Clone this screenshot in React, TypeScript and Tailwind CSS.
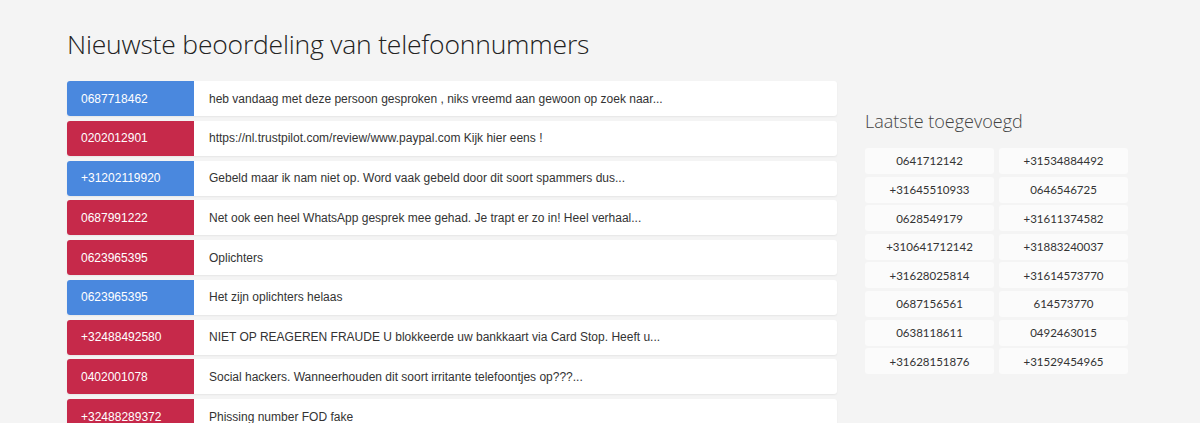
const reviews = [
  { number: '0687718462', type: 'blue', text: 'heb vandaag met deze persoon gesproken , niks vreemd aan gewoon op zoek naar...' },
  { number: '0202012901', type: 'red', text: 'https://nl.trustpilot.com/review/www.paypal.com Kijk hier eens !' },
  { number: '+31202119920', type: 'blue', text: 'Gebeld maar ik nam niet op. Word vaak gebeld door dit soort spammers dus...' },
  { number: '0687991222', type: 'red', text: 'Net ook een heel WhatsApp gesprek mee gehad. Je trapt er zo in! Heel verhaal...' },
  { number: '0623965395', type: 'red', text: 'Oplichters' },
  { number: '0623965395', type: 'blue', text: 'Het zijn oplichters helaas' },
  { number: '+32488492580', type: 'red', text: 'NIET OP REAGEREN FRAUDE U blokkeerde uw bankkaart via Card Stop. Heeft u...' },
  { number: '0402001078', type: 'red', text: 'Social hackers. Wanneerhouden dit soort irritante telefoontjes op???...' },
  { number: '+32488289372', type: 'red', text: 'Phissing number FOD fake' },
]

const latest = [
  '0641712142', '+31534884492',
  '+31645510933', '0646546725',
  '0628549179', '+31611374582',
  '+310641712142', '+31883240037',
  '+31628025814', '+31614573770',
  '0687156561', '614573770',
  '0638118611', '0492463015',
  '+31628151876', '+31529454965',
]

export default function App() {
  return (
    <div className="min-h-[423px] bg-[#f4f4f4] pl-[67px] pt-[24px] overflow-hidden">
      <h1 className="text-[26.5px] font-light text-[#222] leading-[40px] tracking-[-0.2px]" style={{ fontFamily: '"Open Sans", sans-serif' }}>
        Nieuwste beoordeling van telefoonnummers
      </h1>
      <div className="flex gap-[28px] mt-[17px]">
        <div className="w-[770px] flex flex-col gap-[4.75px]" style={{ fontFamily: '"Liberation Sans", Arial, sans-serif' }}>
          {reviews.map((r, i) => (
            <div key={i} className="flex h-[35px] bg-white rounded-[3px] shadow-[0_1px_2px_rgba(0,0,0,0.06)]">
              <div className={`w-[127px] shrink-0 rounded-l-[3px] flex items-center pl-[14px] text-[12px] text-white ${r.type === 'blue' ? 'bg-[#4a88de]' : 'bg-[#c6294a]'}`}>
                {r.number}
              </div>
              <div className="flex items-center pl-[15px] text-[12px] text-[#333]">{r.text}</div>
            </div>
          ))}
        </div>
        <div className="w-[263px] pt-[27px]">
          <h2 className="text-[18px] font-light text-[#444] leading-[26px]" style={{ fontFamily: '"Open Sans", sans-serif' }}>Laatste toegevoegd</h2>
          <div className="grid grid-cols-2 gap-x-[5px] gap-y-[2.6px] mt-[14px]" style={{ fontFamily: 'Lato, sans-serif' }}>
            {latest.map((n, i) => (
              <div key={i} className="h-[26px] bg-[#fbfbfb] rounded-[3px] flex items-center justify-center text-[11.5px] text-[#333]">
                {n}
              </div>
            ))}
          </div>
        </div>
      </div>
    </div>
  )
}
